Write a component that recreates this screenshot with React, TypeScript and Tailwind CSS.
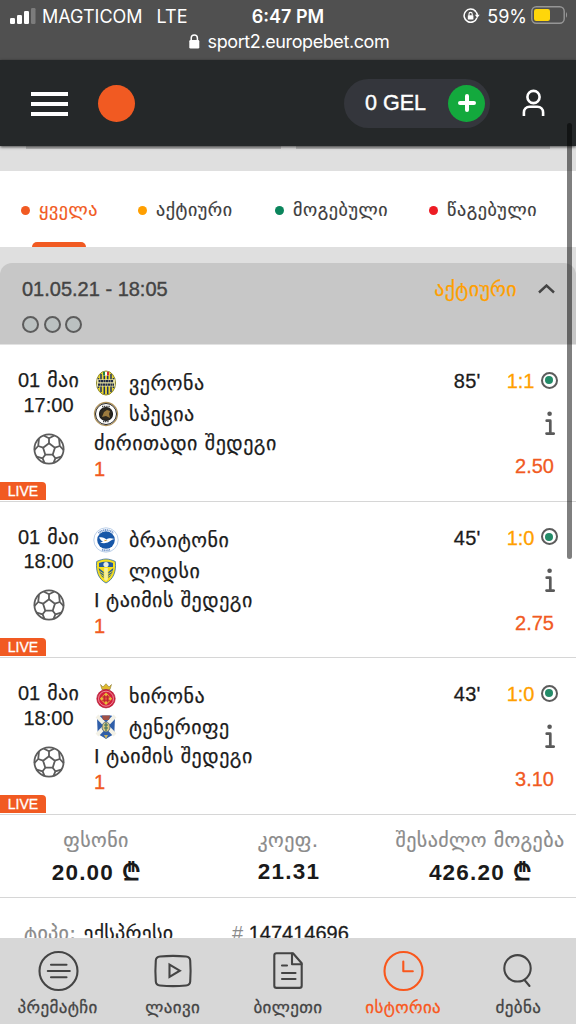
import type { ReactNode } from 'react';

type Team = { name: string; crest: ReactNode };

type Match = {
  time: string;
  home: Team;
  away: Team;
  market: ReactNode;
  minute: string;
  score: string;
  odds: string;
};

/* Icons */
function SignalIcon() {
  return (
    <svg width="26" height="17" viewBox="0 0 26 17" fill="#fff">
      <rect x="0" y="10" width="5" height="6" rx="1.2" />
      <rect x="7" y="7" width="5" height="9" rx="1.2" />
      <rect x="14" y="3" width="5" height="13" rx="1.2" />
      <rect x="21" y="0" width="4.5" height="16" rx="1.2" fillOpacity="0.25" />
    </svg>
  );
}

function RotationLockIcon() {
  return (
    <svg width="17" height="16" viewBox="0 0 17 16" fill="none" stroke="#fff" strokeWidth="1.5">
      <path d="M12.6 3.2A6.6 6.6 0 1 0 14 9.6" />
      <path d="M12 2.7a6.6 6.6 0 0 1 2.3 4.6" />
      <path d="M11.9 6.8h4.8l-2.4 3.2z" fill="#fff" stroke="none" />
      <rect x="4.8" y="7.2" width="5.6" height="4.4" rx="0.6" fill="#fff" stroke="none" />
      <path d="M6 7.5V6a1.6 1.6 0 0 1 3.2 0v1.5" strokeWidth="1.1" />
    </svg>
  );
}

function BatteryIcon() {
  return (
    <svg width="37" height="18" viewBox="0 0 37 18">
      <rect x="0.8" y="0.8" width="32.4" height="16.4" rx="4.5" fill="none" stroke="#969696" strokeWidth="1.4" />
      <rect x="3" y="3" width="16" height="12" rx="2.2" fill="#ffd60a" />
      <path d="M35 6.3c1.4.5 1.4 4.9 0 5.4z" fill="#969696" />
    </svg>
  );
}

function PadlockIcon() {
  return (
    <svg width="11" height="15" viewBox="0 0 11 15">
      <rect x="0.3" y="6" width="10" height="8.5" rx="1.3" fill="#fff" />
      <path d="M2.2 6.8V4a3.1 3.1 0 0 1 6.2 0v2.8" fill="none" stroke="#fff" strokeWidth="1.5" />
    </svg>
  );
}

function UserIcon() {
  return (
    <svg width="23" height="28" viewBox="0 0 23 28" fill="none" stroke="#fff" strokeWidth="2.6">
      <circle cx="11.5" cy="8" r="6.1" />
      <path d="M1.9 27v-3.500c0-3.400 2.300-5.800 5.800-5.800h7.600c3.500 0 5.800 2.400 5.800 5.800V27" />
    </svg>
  );
}

function BallIcon() {
  return (
    <svg width="32" height="32" viewBox="0 0 32 32" fill="none" stroke="#5c5c5c" strokeWidth="1.8" strokeLinejoin="round">
      <circle cx="16" cy="16" r="14.6" />
      <path d="M16 10.300l5.900 4.400-2.200 7h-7.400l-2.200-7z" />
      <path d="M16 10.300V5.200M21.900 14.700l4.900-1.700M19.700 21.700l2.700 3.600M12.300 21.700l-2.700 3.600M10.100 14.700L5.200 13" />
      <path d="M10.500 2.500L16 5.200l5.500-2.700M26 5.300l.8 7.700 3.900 4.200M29 23.400l-6.600 1.900-2 4.900M11.600 30.200l-2-4.900L3 23.400M1.300 17.200L5.200 13 6 5.300" />
    </svg>
  );
}

function InfoIcon() {
  return (
    <svg width="10" height="25" viewBox="0 0 10 25" fill="none" stroke="#5a5a5a" strokeWidth="2.7" strokeLinecap="round" strokeLinejoin="round">
      <circle cx="4.6" cy="2.700" r="2.300" fill="#5a5a5a" stroke="none" />
      <path d="M1.700 9.700h3.600v12.800M1.500 22.600h7.200" />
    </svg>
  );
}

/* Club crests */
const verona = (
  <svg width="26" height="26" viewBox="0 0 26 26">
    <ellipse cx="13" cy="13" rx="9.500" ry="12" fill="#e8d52e" stroke="#8b862f" strokeWidth="1" />
    <path d="M8 4v18M11.300 3v21M14.700 3v21M18 4v18M5.500 8v10M20.500 8v10" stroke="#1f3263" strokeWidth="1.500" />
    <path d="M10 1.800h6v3.800h-6z" fill="#fff" />
    <path d="M10 1.800h2v3.800h-2z" fill="#23813f" />
    <path d="M14 1.800h2v3.800h-2z" fill="#d32f2f" />
    <path d="M4 9.300h18v7.200H4z" fill="#e8e3a5" />
    <path d="M5.500 11.200h15M5 14.700h16" stroke="#202b45" strokeWidth="2.200" strokeDasharray="2.100 .4" />
  </svg>
);

const spezia = (
  <svg width="26" height="26" viewBox="0 0 26 26">
    <circle cx="13" cy="13" r="11.500" fill="#fff" stroke="#b1935a" strokeWidth="1.300" />
    <circle cx="13" cy="13" r="10.500" fill="none" stroke="#292929" strokeWidth="1" />
    <circle cx="13" cy="13" r="6.500" fill="#2c2820" stroke="#1a1a1a" strokeWidth="1.200" />
    <path d="M9 16l2-5 3-2 3 1-1 3 1 4-4-2z" fill="#9b7a3e" />
    <path d="M9 5.500h8M10 20.500h6" stroke="#444" strokeWidth="1.500" strokeDasharray="1.200 .6" />
  </svg>
);

const brighton = (
  <svg width="26" height="26" viewBox="0 0 26 26">
    <circle cx="13" cy="13" r="12.200" fill="#fff" stroke="#9fbbe0" strokeWidth=".7" />
    <path d="M5.500 6.200a10.400 10.400 0 0 1 15 0M9 22.600a10.400 10.400 0 0 0 8 0" fill="none" stroke="#7095cc" strokeWidth="1.800" strokeDasharray="1.200 .6" />
    <circle cx="13" cy="13" r="8.800" fill="#1757a8" />
    <path d="M6 10.500c3-1 6 .5 7.500 2 2-1.500 4.500-1.300 8-.6-2.500.8-4 1.700-5.500 2.900-3 2-6 1.200-9 1.200l3-1.600c-1.500-.4-3-2-4-3.900z" fill="#fff" />
    <path d="M11.500 12.700l3 .8-3 .8z" fill="#e3a72f" />
  </svg>
);

const leeds = (
  <svg width="26" height="26" viewBox="0 0 26 26">
    <path d="M13 1c3 0 6 1 9.300 2.500C23.500 14 20 21.500 13 25 6 21.500 2.500 14 3.700 3.500 7 2 10 1 13 1z" fill="#f8df1c" stroke="#2d6ba5" strokeWidth=".8" />
    <path d="M6 5c4-1.800 10-1.800 14 0v4H6z" fill="#275b9b" />
    <path d="M5.700 10l5 4v6c-3-2-4.700-6-5-10zM20.300 10l-5 4v6c3-2 4.700-6 5-10z" fill="#275b9b" />
    <path d="M5.500 12.500l6 4M20.500 12.500l-6 4M6.800 15.500l4 3M19.200 15.500l-4 3" stroke="#f8df1c" strokeWidth=".9" />
    <path d="M11.200 10h3.600v11.500L13 23l-1.800-1.500z" fill="#f5ef9e" />
    <circle cx="13" cy="6.500" r="2.600" fill="#e9eee8" />
  </svg>
);

const girona = (
  <svg width="26" height="26" viewBox="0 0 26 26">
    <path d="M7.500 1.500l2.500 2.500L13 .7 16 4l2.500-2.500L17 6.500H9z" fill="#dfb92d" stroke="#7b6a1c" strokeWidth=".5" />
    <circle cx="13" cy="15.700" r="9.200" fill="#d51d3c" stroke="#a81b32" strokeWidth=".7" />
    <circle cx="13" cy="15.700" r="7.500" fill="none" stroke="#eda9b4" strokeWidth=".8" />
    <path d="M13 9.500l6.200 6.200-6.200 6.200-6.200-6.200z" fill="#e7bd38" />
    <path d="M10 12.700h6v6h-6z" fill="#e14a3d" />
    <path d="M11.500 12v7.500M14.500 12v7.500M9 14h8M9 17.300h8" stroke="#b5252d" strokeWidth=".8" />
  </svg>
);

const tenerife = (
  <svg width="26" height="26" viewBox="0 0 26 26">
    <path d="M4 3l4-1.500h10L22 3l-.7 17-5.300 3-3 2-3-2-5.300-3z" fill="#2f5ea9" />
    <path d="M4 2l18 19M22 2L4 21" stroke="#f3f1e6" strokeWidth="4" />
    <path d="M9 1.500h8l-1 4.500h-6z" fill="#a25145" />
    <ellipse cx="13" cy="13" rx="4" ry="5" fill="#d9c77e" stroke="#3c5c84" strokeWidth=".8" />
    <path d="M11 11h4M11 14h4M13 9v8" stroke="#3e7061" strokeWidth="1.200" />
    <path d="M11 21h4l-2 4z" fill="#c8b564" />
  </svg>
);

const tabs = [
  { label: 'ყველა', dot: 'bg-[#f15a22]', text: 'text-[#f15a22]', pos: 'ml-[21px] w-[117px]' },
  { label: 'აქტიური', dot: 'bg-[#ff9f00]', text: 'text-[#3c3c3c]', pos: 'w-[137px]' },
  { label: 'მოგებული', dot: 'bg-[#0b855c]', text: 'text-[#3c3c3c]', pos: 'w-[154px]' },
  { label: 'წაგებული', dot: 'bg-[#ed1c24]', text: 'text-[#3c3c3c]', pos: '' },
];

const firstHalf = (
  <>
    <span className="font-['Liberation_Sans']">I</span> ტაიმის შედეგი
  </>
);

const matches: Match[] = [
  {
    time: '17:00',
    home: { name: 'ვერონა', crest: verona },
    away: { name: 'სპეცია', crest: spezia },
    market: 'ძირითადი შედეგი',
    minute: "85'",
    score: '1:1',
    odds: '2.50',
  },
  {
    time: '18:00',
    home: { name: 'ბრაიტონი', crest: brighton },
    away: { name: 'ლიდსი', crest: leeds },
    market: firstHalf,
    minute: "45'",
    score: '1:0',
    odds: '2.75',
  },
  {
    time: '18:00',
    home: { name: 'ხირონა', crest: girona },
    away: { name: 'ტენერიფე', crest: tenerife },
    market: firstHalf,
    minute: "43'",
    score: '1:0',
    odds: '3.10',
  },
];

const totals = [
  { label: 'ფსონი', value: '20.00', currency: true },
  { label: 'კოეფ.', value: '21.31', currency: false },
  { label: 'შესაძლო მოგება', value: '426.20', currency: true },
];

const navItems = [
  {
    label: 'პრემატჩი',
    color: 'text-[#444]',
    icon: (
      <>
        <circle cx="21.500" cy="21" r="19" />
        <path d="M14 14.700h15.500M10.800 21h22M14 27.200h15.500" />
      </>
    ),
  },
  {
    label: 'ლაივი',
    color: 'text-[#444]',
    icon: (
      <>
        <path d="M8 6.500q13-1.200 26 0 4 .4 4.200 4 .8 10.500 0 21-.2 3.600-4.200 4-13 1.200-26 0-4-.4-4.200-4-.8-10.500 0-21 .2-3.600 4.200-4z" />
        <path d="M17.500 14.500v12.300l10.300-6.100z" strokeLinejoin="miter" />
      </>
    ),
  },
  {
    label: 'ბილეთი',
    color: 'text-[#444]',
    icon: (
      <>
        <path d="M9.500 3.300h16.500l8.700 10v22.400q0 2.200-2.200 2.200H9.500q-2.200 0-2.200-2.200V5.500q0-2.200 2.200-2.200z" />
        <path d="M25 3.500v10.800h9.500M15 15.500h5M15 23h13.500M15 29h13.500" />
      </>
    ),
  },
  {
    label: 'ისტორია',
    color: 'text-[#f9571c]',
    icon: (
      <>
        <circle cx="21.500" cy="21" r="19" />
        <path d="M21.300 11.500v9.800h9.500" />
      </>
    ),
  },
  {
    label: 'ძებნა',
    color: 'text-[#444]',
    icon: (
      <>
        <circle cx="20.500" cy="18.300" r="13.200" />
        <path d="M27.500 30l5 6" />
      </>
    ),
  },
];

function StatusBar() {
  return (
    <div className="h-[60px] bg-[#505050] text-white font-['Inter',sans-serif] text-[18px]">
      <div className="h-8 grid grid-cols-3 items-center">
        <div className="flex items-center pl-[10px] whitespace-nowrap">
          <SignalIcon />
          <span className="ml-[6px]">MAGTICOM</span>
          <span className="ml-[14px]">LTE</span>
        </div>
        <div className="text-center font-semibold">6:47 PM</div>
        <div className="flex items-center justify-end pr-[8px]">
          <RotationLockIcon />
          <span className="ml-[7px] mr-[4px]">59%</span>
          <span className="-mt-[2px]">
            <BatteryIcon />
          </span>
        </div>
      </div>
      <div className="h-[18px] flex items-center justify-center gap-[8px] pl-[2px]">
        <PadlockIcon />
        <span className="tracking-[-0.4px]">sport2.europebet.com</span>
      </div>
    </div>
  );
}

function Header() {
  return (
    <header className="relative z-10 h-[86px] shrink-0 bg-[#252829] flex items-center pl-[31px] pr-[31px] shadow-[0_1px_3px_rgba(0,0,0,0.7)]">
      <div className="w-[37px] mt-[2px] flex flex-col gap-[6px]">
        <div className="h-1 bg-white" />
        <div className="h-1 bg-white" />
        <div className="h-1 bg-white" />
      </div>
      <div className="ml-[30px] size-[37px] rounded-full bg-[#f15a22]" />
      <div className="ml-auto w-[146px] h-[49px] rounded-full bg-[#34363c] flex items-center justify-between pl-[21px] pr-[5px] text-white text-[21.5px]">
        <span className="[-webkit-text-stroke:0.4px]">0 GEL</span>
        <span className="size-[37px] rounded-full bg-[#13a93d] flex items-center justify-center">
          <svg width="20" height="20" viewBox="0 0 20 20" stroke="#fff" strokeWidth="4" strokeLinecap="round">
            <path d="M10 3v14M3 10h14" />
          </svg>
        </span>
      </div>
      <div className="ml-[32px]">
        <UserIcon />
      </div>
    </header>
  );
}

function MatchRow({ match }: { match: Match }) {
  return (
    <div className="relative h-[156.5px] border-b border-[#d6d6d6] flex text-[#1c1c1c]">
      <div className="w-[94px] pt-[23px] flex flex-col items-center [-webkit-text-stroke:0.25px]">
        <div className="h-[24.5px] pl-[3px] flex items-center gap-[7px] text-[20px] whitespace-nowrap">
          <span>01</span>
          <span className="font-['DejaVu_Sans'] tracking-[0.3px]">მაი</span>
        </div>
        <div className="h-[24.5px] pl-[3px] flex items-center text-[20px]">{match.time}</div>
        <div className="mt-[15.5px] pl-[4px]">
          <BallIcon />
        </div>
      </div>
      <div className="flex-1 pt-[22.5px] font-['DejaVu_Sans'] text-[20px] tracking-[0.5px] whitespace-nowrap [-webkit-text-stroke:0.25px]">
        {[match.home, match.away].map((team) => (
          <div key={team.name} className="h-[31px] flex items-center gap-[10px]">
            <span className="-ml-px">{team.crest}</span>
            <span>{team.name}</span>
          </div>
        ))}
        <div className="h-[27px] flex items-center gap-[6px]">{match.market}</div>
        <div className="h-[25px] flex items-center font-['Liberation_Sans'] text-[#f15a22] [-webkit-text-stroke:0.4px]">1</div>
      </div>
      <div className="pr-[18.5px] pt-[24px] flex flex-col items-end text-[20px] [-webkit-text-stroke:0.3px]">
        <div className="h-[24px] flex items-center">
          <span className="tracking-[0.3px]">{match.minute}</span>
          <span className="ml-[26px] text-[#ff9f00]">{match.score}</span>
          <span className="ml-[6px] mb-[2px] size-[17px] rounded-full border-2 border-[#5c5c5c] flex items-center justify-center">
            <span className="size-2 rounded-full bg-[#238b68]" />
          </span>
        </div>
        <div className="mt-[18px] mr-[3px]">
          <InfoIcon />
        </div>
        <div className="mt-[18px] mr-[3.5px] h-[24px] flex items-center text-[#f15a22]">{match.odds}</div>
      </div>
      <div className="absolute left-0 bottom-px w-[46px] h-[18px] rounded-tr-[4px] bg-[#f15a22] text-white text-[14px] leading-[18px] text-center [-webkit-text-stroke:0.3px]">
        LIVE
      </div>
    </div>
  );
}

export default function App() {
  return (
    <div className="relative w-[576px] h-[1024px] overflow-hidden bg-[#dfdfdf] flex flex-col font-['Liberation_Sans',sans-serif]">
      <StatusBar />
      <Header />

      {/* Bottom edges of the cards scrolled under the header */}
      <div className="h-[25px] shrink-0 px-[26px] flex gap-[15px]">
        <div className="flex-1 h-[3px] bg-[#b8b8b8]" />
        <div className="flex-1 h-[3px] bg-[#b8b8b8]" />
      </div>

      {/* Filter tabs */}
      <div className="h-[76px] shrink-0 bg-white flex flex-col justify-between">
        <div className="pt-[26px] flex font-['DejaVu_Sans'] text-[18px] tracking-[0.6px] leading-[26px] [-webkit-text-stroke:0.2px]">
          {tabs.map((tab) => (
            <div key={tab.label} className={`${tab.pos} ${tab.text} shrink-0 flex items-center gap-[9px] whitespace-nowrap`}>
              <span className={`size-[9px] rounded-full ${tab.dot}`} />
              {tab.label}
            </div>
          ))}
        </div>
        <div className="ml-[32px] w-[54px] h-[5px] rounded-t-[5px] bg-[#f15a22]" />
      </div>

      {/* Ticket header */}
      <div className="mt-4 h-[82px] shrink-0 rounded-t-[12px] bg-[#c7c7c7] border-b border-[#e2e2e2] pl-[22px] pr-[21px] text-[#444]">
        <div className="h-[52px] flex items-center justify-between text-[20px]">
          <span className="[-webkit-text-stroke:0.4px]">01.05.21 - 18:05</span>
          <div className="flex items-center gap-[21px]">
            <span className="font-['DejaVu_Sans'] tracking-[0.3px] text-[#ff9f00] [-webkit-text-stroke:0.25px]">აქტიური</span>
            <svg width="17" height="11" viewBox="0 0 17 11" fill="none" stroke="#444" strokeWidth="2.4">
              <path d="M1 8.500l7.500-7L16 8.500" />
            </svg>
          </div>
        </div>
        <div className="mt-px flex gap-[4.5px]">
          <span className="size-[17px] rounded-full border-2 border-[#5c5c5c] bg-[#bbc1c1]" />
          <span className="size-[17px] rounded-full border-2 border-[#5c5c5c] bg-[#bbc1c1]" />
          <span className="size-[17px] rounded-full border-2 border-[#5c5c5c] bg-[#bbc1c1]" />
        </div>
      </div>

      <div className="bg-white shrink-0 h-[593px]">
        {matches.map((match) => (
          <MatchRow key={match.home.name} match={match} />
        ))}

        {/* Totals */}
        <div className="h-[83px] border-b border-[#d6d6d6] grid grid-cols-3 pt-[11px]">
          {totals.map((total) => (
            <div key={total.label} className="flex flex-col items-center whitespace-nowrap">
              <span className="font-['DejaVu_Sans'] text-[20px] tracking-[0.4px] leading-[28px] text-[#8b8b8b] [-webkit-text-stroke:0.2px]">{total.label}</span>
              <span className="pl-[2px] text-[22.5px] leading-[36px] font-bold tracking-[1.2px] text-[#1a1a1a]">
                {total.value}
                {total.currency && <span className="ml-[8px] text-[24px]">₾</span>}
              </span>
            </div>
          ))}
        </div>

        <div className="flex pt-[21px] pl-[24px] text-[20px] leading-[28px] whitespace-nowrap">
          <div className="w-[208px] flex gap-[7px] font-['DejaVu_Sans'] tracking-[0.3px] [-webkit-text-stroke:0.2px]">
            <span className="text-[#8b8b8b]">ტიპი:</span>
            <span className="text-[#1c1c1c]">ექსპრესი</span>
          </div>
          <div>
            <span className="text-[#8b8b8b]">#</span> <span className="text-[#1c1c1c] [-webkit-text-stroke:0.3px]">147414696</span>
          </div>
        </div>
      </div>

      {/* Bottom navigation */}
      <nav className="relative h-[86px] shrink-0 bg-[#d7d7d7] grid grid-cols-5 font-['DejaVu_Sans'] text-[17px] tracking-[0.4px]">
        {navItems.map((item) => (
          <div key={item.label} className={`${item.color} flex flex-col items-center pt-[12px]`}>
            <svg width="42" height="42" viewBox="0 0 42 42" fill="none" stroke="currentColor" strokeWidth="2.1" strokeLinecap="round" strokeLinejoin="round">
              {item.icon}
            </svg>
            <span className="mt-[4px] leading-[22px] [-webkit-text-stroke:0.3px]">{item.label}</span>
          </div>
        ))}
      </nav>

      {/* Scroll indicator */}
      <div className="absolute z-20 left-[567px] top-[123px] w-[5px] h-[436px] rounded-full bg-black/50" />
    </div>
  );
}
